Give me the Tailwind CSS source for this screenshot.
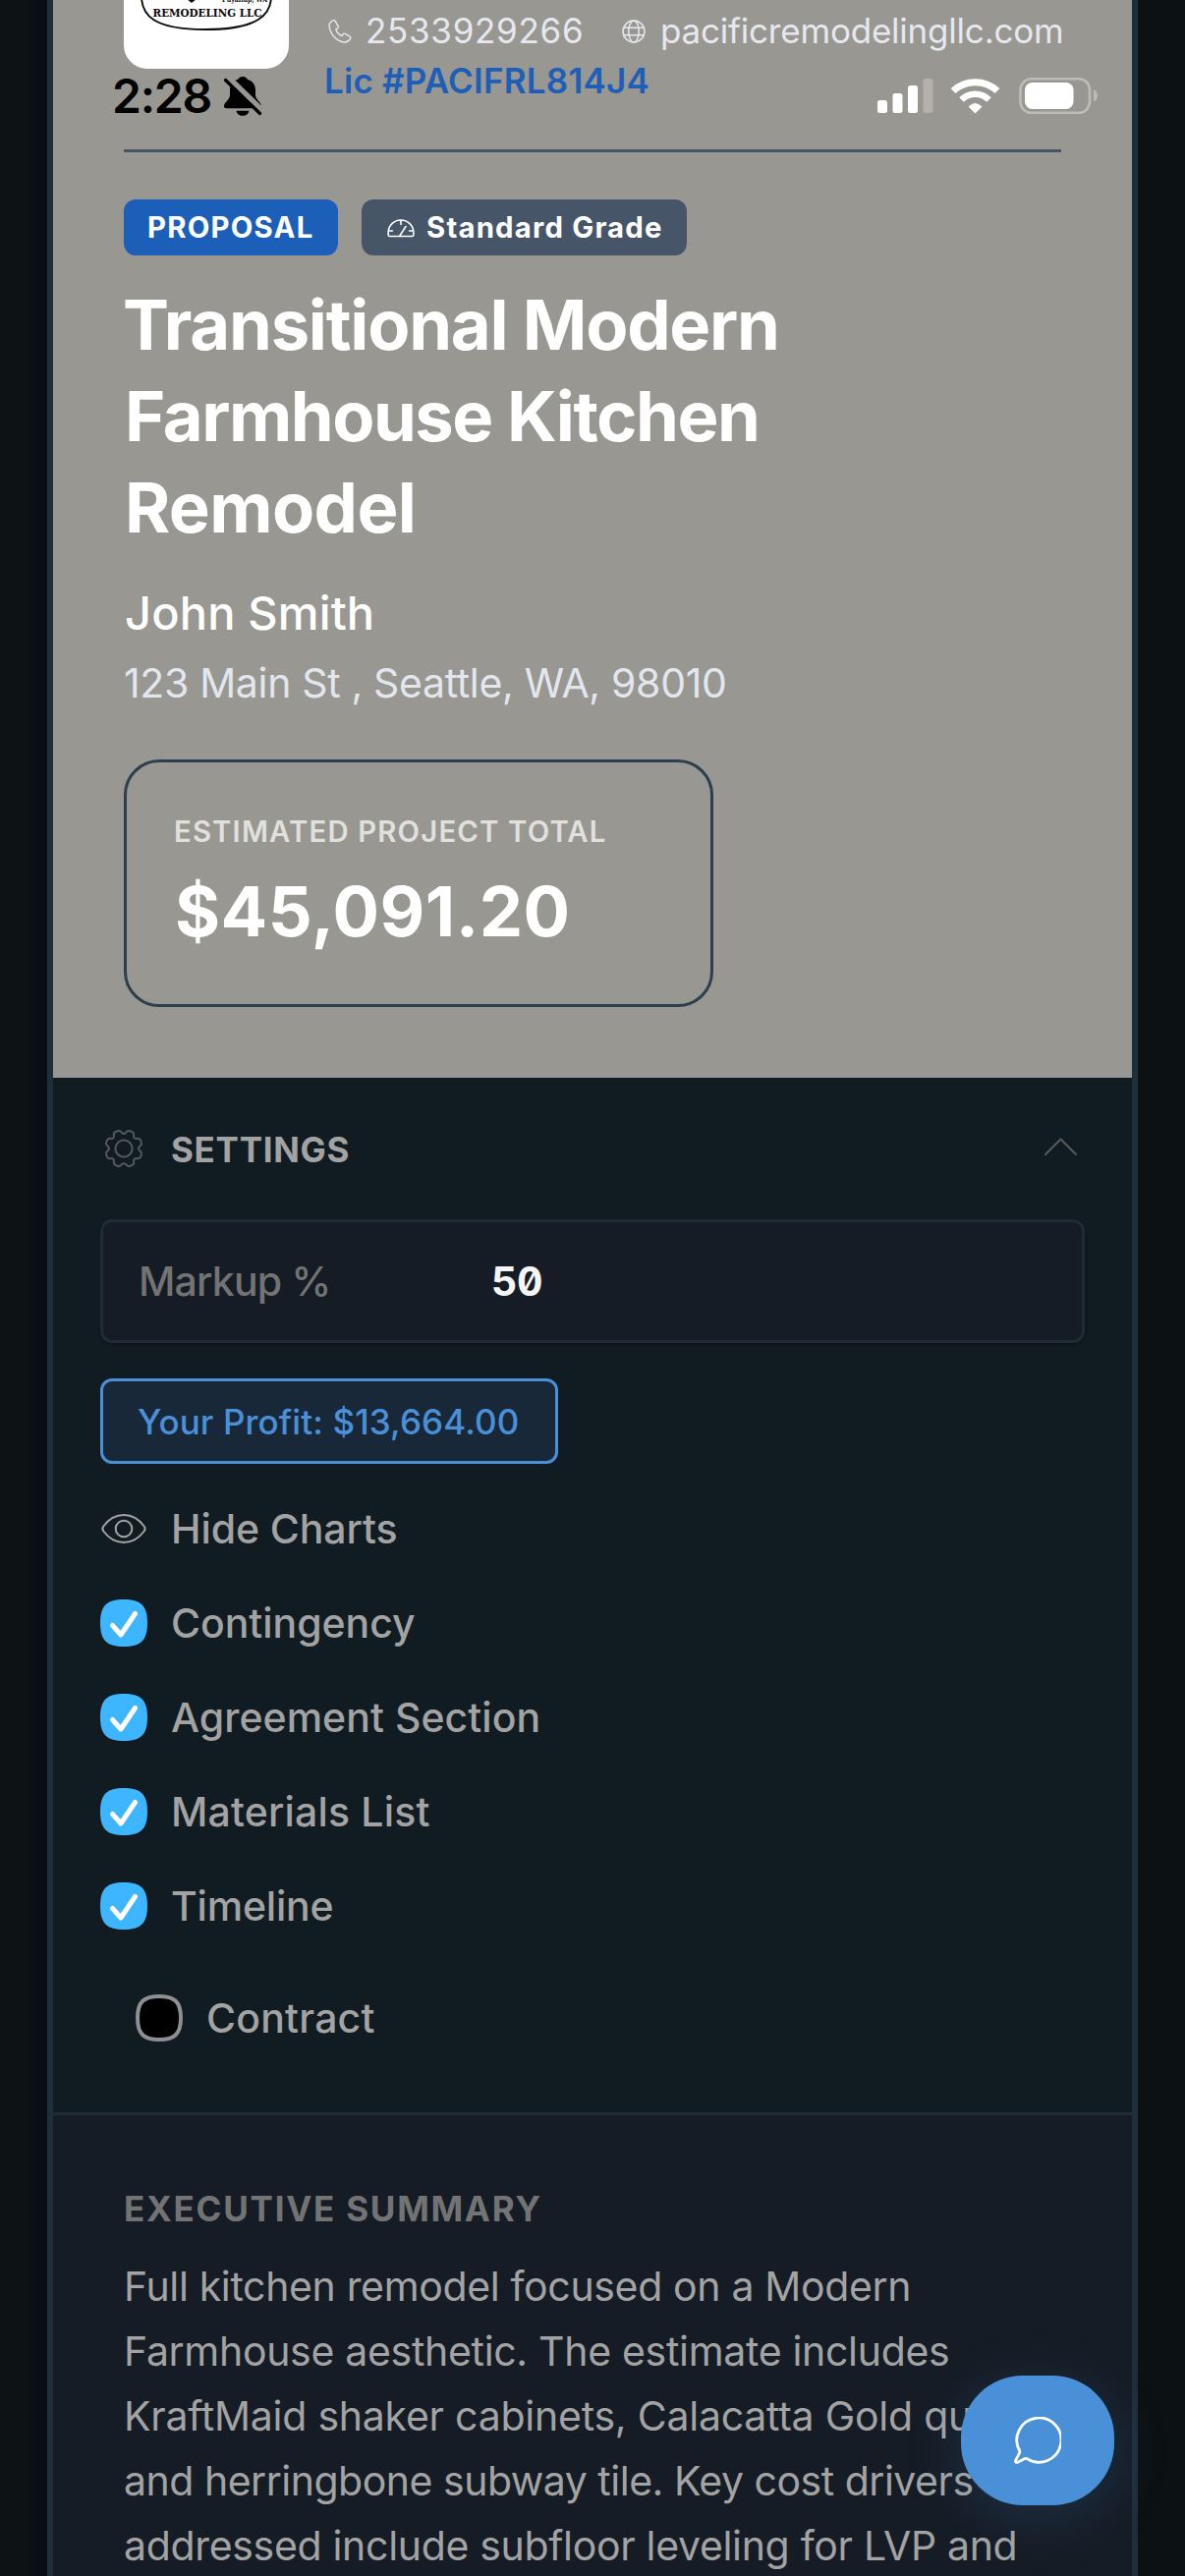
<!DOCTYPE html>
<html lang="en">
<head>
<meta charset="utf-8">
<title>Proposal</title>
<script src="https://cdn.jsdelivr.net/npm/@tailwindcss/browser@4"></script>
</head>
<body class="relative h-[2622px] w-[1206px] overflow-hidden bg-[#0d1214] font-[Inter,sans-serif]">
<div class="h-[2622px] bg-linear-to-r from-[#0d1214] from-[2%] via-[#090d14] via-[4%] to-[#0c1113] px-12 overflow-hidden">
<main class="h-[2700px] border-x-6 border-[#1e2e3b] bg-[#151c25]">

  <!-- Proposal header -->
  <header class="h-[1097px] bg-[#989791] px-[72px] text-white">
    <div class="flex h-[155px] items-start border-b-3 border-[#475569]">
      <div class="h-[70px] w-[168px] shrink-0 overflow-hidden rounded-b-3xl bg-white">
        <svg class="block" width="168" height="70" viewBox="126 0 168 70">
          <path d="M144 -2C145 14 154 30 209 30S275 14 276 -2" fill="none" stroke="#0a0a0a" stroke-width="1.9"/>
          <path d="M190 -1L195 3L200 -1Z" fill="#0a0a0a"/>
          <text x="226" y="2" font-family="DejaVu Serif" font-weight="700" font-size="7.5" textLength="46" lengthAdjust="spacingAndGlyphs" fill="#111">Puyallup, WA</text>
          <text x="155.500" y="17" font-family="DejaVu Serif" font-weight="700" font-size="10.500" textLength="111" lengthAdjust="spacingAndGlyphs" fill="#0a0a0a">REMODELING LLC</text>
        </svg>
      </div>
      <div class="ml-9 shrink-0 pt-1.5">
        <div class="flex h-[51px] items-center text-[35px] text-[#e6e8ef]">
          <svg class="ml-1 mr-3.5 h-6 w-6 shrink-0" viewBox="0 0 24 24" fill="none" stroke="currentColor" stroke-width="1.400" stroke-linejoin="round"><path d="M4.200 1C2 2.500 .8 4.500 1.200 7c.8 8 7.500 15.200 15.300 16 2.700.2 4.500-1.200 6-3.600.5-.9.3-1.800-.5-2.300l-4.600-2.700c-.8-.4-1.700-.3-2.200.4l-1.300 1.700c-3-1.200-5-3.400-6.200-6.400l1.900-1.500c.7-.6.8-1.400.4-2.200L7.300 1.600C6.700.5 5.300.2 4.200 1Z"/></svg>
          <span class="w-[260px] whitespace-nowrap tracking-[0.7px]">2533929266</span>
          <svg class="mr-[15px] ml-[1px] h-6 w-6 shrink-0" viewBox="0 0 24 24" fill="none" stroke="currentColor" stroke-width="1.500"><circle cx="12" cy="12" r="11"/><ellipse cx="12" cy="12" rx="5.200" ry="11"/><path d="M1.600 8.300h20.800M1.600 15.700h20.800"/></svg>
          <span class="whitespace-nowrap tracking-[-0.21px]">pacificremodelingllc.com</span>
        </div>
        <div class="h-[51px] text-[35px] leading-[51px] font-semibold tracking-[0.22px] text-[#1d5fb8]">Lic #PACIFRL814J4</div>
      </div>
    </div>

    <div class="mt-12 flex h-[57px] gap-6">
      <span class="w-[218px] rounded-xl bg-[#1b5fb8] pl-6 text-[29.3px] leading-[57px] font-bold tracking-[1.25px]">PROPOSAL</span>
      <span class="flex w-[331px] items-center rounded-xl bg-[#475569] pl-[26px] text-[29.3px] font-bold">
        <svg class="mr-3 h-7 w-7" viewBox="0 0 28 28" fill="none" stroke="currentColor" stroke-width="1.600" stroke-linejoin="round" stroke-linecap="round"><path d="M2.500 22.500C1.500 22.500 1.200 21.800 1.200 21v-2.500C1.200 11.500 7 6 14 6s12.800 5.500 12.800 12.500V21c0 .8-.3 1.500-1.300 1.500ZM14 6v4.500M1.500 17h4M22.500 17h4M12.500 22.500L19 12.500"/></svg>
        <span class="tracking-[1.2px] whitespace-nowrap">Standard Grade</span>
      </span>
    </div>

    <h1 class="mt-6 text-[70.5px] leading-[93px] font-bold whitespace-nowrap">
      <span class="-ml-px block tracking-[-1.25px]">Transitional Modern</span>
      <span class="ml-px block tracking-[-1.48px]">Farmhouse Kitchen</span>
      <span class="ml-px block tracking-[-0.6px]">Remodel</span>
    </h1>
    <p class="mt-[31px] ml-px h-[60px] text-[47px] leading-[60px] font-medium tracking-[0.15px]">John Smith</p>
    <p class="mt-[11px] h-[60px] text-[41px] leading-[60px] tracking-[-0.34px] text-[#e2e6ee]">123 Main St , Seattle, WA, 98010</p>

    <div class="mt-12 h-[252px] w-[600px] rounded-[36px] border-3 border-[#2c3f4e] pt-[51px] pl-12 whitespace-nowrap">
      <div class="h-10 text-[29.3px] leading-10 font-semibold tracking-[1.16px] text-[#e0e0de]">ESTIMATED PROJECT TOTAL</div>
      <div class="mt-4 ml-px text-[70.5px] leading-[90px] font-bold tracking-[0.45px]">$45,091.20</div>
    </div>
  </header>

  <!-- Settings -->
  <section class="h-[1056px] border-b-3 border-[#1f2d36] bg-[#111b22] px-12 pt-[43px] text-[#a3a3a3]">
    <div class="flex h-[60px] items-center">
      <svg class="-mt-0.5 h-12 w-12" viewBox="0 0 48 48" fill="none" stroke="#55585b" stroke-width="2" stroke-linejoin="round"><circle cx="24" cy="24" r="8.600"/><path d="M20 6.200C18.600 5.400 14.500 7 14 8.600C13.500 10.800 14.500 12 13.300 13.300C12 14.500 10.800 13.500 8.600 14C7 14.500 5.400 18.600 6.200 20C7.300 22 9 22.200 9 24C9 25.800 7.300 26 6.200 28C5.400 29.400 7 33.500 8.600 34C10.800 34.500 12 33.500 13.300 34.700C14.500 36 13.500 37.200 14 39.400C14.500 41 18.600 42.600 20 41.800C22 40.700 22.200 39 24 39C25.800 39 26 40.700 28 41.800C29.400 42.600 33.500 41 34 39.400C34.500 37.200 33.500 36 34.700 34.700C36 33.500 37.200 34.500 39.400 34C41 33.500 42.600 29.400 41.800 28C40.700 26 39 25.800 39 24C39 22.200 40.700 22 41.800 20C42.600 18.600 41 14.500 39.400 14C37.200 13.500 36 14.500 34.700 13.300C33.500 12 34.500 10.800 34 8.600C33.500 7 29.400 5.400 28 6.200C26 7.300 25.800 9 24 9C22.200 9 22 7.300 20 6.200Z"/></svg>
      <h2 class="ml-6 flex-1 text-[35px] font-bold tracking-[0.7px]">SETTINGS</h2>
      <svg class="-mt-2 mr-px h-12 w-12" viewBox="0 0 48 48" fill="none" stroke="#5a5a5c" stroke-width="2" stroke-linecap="round" stroke-linejoin="round"><path d="M9 33L24.500 17.500L40 33"/></svg>
    </div>

    <label class="mt-[41px] flex h-[126px] items-center rounded-xl border-3 border-[#1e2c35] bg-[#151c25] pl-9 shadow-sm shadow-black/30">
      <span class="w-[359px] pt-0.5 text-[41px] font-medium tracking-[-0.8px] text-[#737373]">Markup %</span>
      <span class="pt-0.5 text-[41px] font-bold text-[#f5f5f5] [font-feature-settings:'zero','tnum'] tracking-[-0.5px]">50</span>
    </label>

    <div class="mt-9 h-[87px] w-[466px] rounded-xl border-3 border-[#4a90d9] bg-[#182838] pl-[35px] text-[35px] leading-[82px] font-medium tracking-[0.12px] whitespace-nowrap text-[#4a90d9]">Your Profit: $13,664.00</div>

    <div class="mt-[42px] flex flex-col gap-12 text-[41px] leading-[48px] font-medium">
      <div class="flex h-12 items-center gap-6"><svg class="h-12 w-12" viewBox="0 0 48 48" fill="none" stroke="#a3a3a3" stroke-width="2" stroke-linejoin="round"><circle cx="24" cy="24" r="8.300"/><path d="M3.300 26.500C2.200 25 2.200 23 3.300 21.500C8.500 14.500 15.500 10 24 10S39.500 14.500 44.700 21.500C45.800 23 45.800 25 44.700 26.500C39.500 33.500 32.500 38 24 38S8.500 33.500 3.300 26.500Z"/></svg><span class="tracking-[-0.1px]">Hide Charts</span></div>
      <div class="flex h-12 items-center gap-6"><svg class="h-12 w-12" viewBox="0 0 48 48"><path d="M24 0C41 0 48 6 48 24S41 48 24 48S0 42 0 24S7 0 24 0Z" fill="#3db5ff"/><path d="M12.500 26.500L21 36L35.500 14.500" fill="none" stroke="#fff" stroke-width="5" stroke-linecap="round" stroke-linejoin="round"/></svg><span class="tracking-[-0.05px]">Contingency</span></div>
      <div class="flex h-12 items-center gap-6"><svg class="h-12 w-12" viewBox="0 0 48 48"><path d="M24 0C41 0 48 6 48 24S41 48 24 48S0 42 0 24S7 0 24 0Z" fill="#3db5ff"/><path d="M12.500 26.500L21 36L35.500 14.500" fill="none" stroke="#fff" stroke-width="5" stroke-linecap="round" stroke-linejoin="round"/></svg><span class="tracking-[0.05px]">Agreement Section</span></div>
      <div class="flex h-12 items-center gap-6"><svg class="h-12 w-12" viewBox="0 0 48 48"><path d="M24 0C41 0 48 6 48 24S41 48 24 48S0 42 0 24S7 0 24 0Z" fill="#3db5ff"/><path d="M12.500 26.500L21 36L35.500 14.500" fill="none" stroke="#fff" stroke-width="5" stroke-linecap="round" stroke-linejoin="round"/></svg><span class="tracking-[0.17px]">Materials List</span></div>
      <div class="flex h-12 items-center gap-6"><svg class="h-12 w-12" viewBox="0 0 48 48"><path d="M24 0C41 0 48 6 48 24S41 48 24 48S0 42 0 24S7 0 24 0Z" fill="#3db5ff"/><path d="M12.500 26.500L21 36L35.500 14.500" fill="none" stroke="#fff" stroke-width="5" stroke-linecap="round" stroke-linejoin="round"/></svg><span class="tracking-[-0.2px]">Timeline</span></div>
      <div class="mt-[18px] ml-9 flex h-12 items-center gap-6"><svg class="h-12 w-12" viewBox="0 0 48 48"><path d="M24 2C39.500 2 46 7.500 46 24S39.500 46 24 46S2 40.500 2 24S8.500 2 24 2Z" fill="#000" stroke="#8e8e93" stroke-width="4"/></svg><span class="tracking-[0.2px]">Contract</span></div>
    </div>
  </section>

  <!-- Executive summary -->
  <section class="px-[72px] pt-[70px] whitespace-nowrap">
    <h2 class="h-[50px] text-[35px] leading-[50px] font-bold tracking-[1.74px] text-[#737373]">EXECUTIVE SUMMARY</h2>
    <p class="mt-[21px] text-[41px] leading-[66px] text-[#a3a3a3]">
      <span class="block tracking-[-0.35px]">Full kitchen remodel focused on a Modern</span>
      <span class="block tracking-[-0.31px]">Farmhouse aesthetic. The estimate includes</span>
      <span class="block tracking-[-0.24px]">KraftMaid shaker cabinets, Calacatta Gold quartz,</span>
      <span class="block tracking-[-0.49px]">and herringbone subway tile. Key cost drivers</span>
      <span class="block tracking-[-0.32px]">addressed include subfloor leveling for LVP and</span>
    </p>
  </section>
</main>
</div>

<!-- Chat button floating over the page -->
<button class="absolute top-[2418px] left-[978px] flex h-[132px] w-[156px] items-center justify-center rounded-[63px] bg-[#4a90d9] shadow-[0_12px_60px_rgba(74,144,217,0.18)]">
  <svg class="h-12 w-12" viewBox="0 0 48 48" fill="none" stroke="#fff" stroke-width="2.800" stroke-linejoin="round" stroke-linecap="round"><path d="M5.800 34.800A22.600 22.600 0 1 1 13.200 42.600C12.500 42.300 11.800 42.200 11 42.500L3.800 46.200C2.200 46.900 1.200 46 1.600 44.400L5.500 36.800C5.900 36 6 35.400 5.800 34.800Z"/></svg>
</button>

<!-- Phone status bar over the page -->
<div class="absolute top-[78px] left-[114px] flex h-10 w-[1004px] items-center">
  <span class="text-[48px] leading-10 font-semibold tracking-[-1.21px] text-black">2:28</span>
  <svg class="ml-[12px] h-10 w-10" viewBox="0 0 40 40"><path d="M20 0c-2.500 0-4 1.200-4.800 2.700C9.300 4.500 7 9.500 7 14v5c0 4-6 7.500-6 11 0 1.500 1 2.200 2.200 2.200h33.600c1.200 0 2.200-.7 2.200-2.200 0-3.500-6-7-6-11v-5c0-4.500-2.300-9.500-8.200-11.300C24 1.200 22.500 0 20 0ZM13.500 34.800h13c-.5 3-3 5-6.500 5s-6-2-6.500-5Z" fill="#000"/><path d="M4 1L40 36" stroke="#989791" stroke-width="8"/><path d="M2.500 3.500L37.500 37.500" stroke="#000" stroke-width="3.200" stroke-linecap="round"/></svg>
  <svg class="ml-auto h-10 w-[225px]" viewBox="893 78 225 40"><g fill="#fff"><rect x="893" y="102" width="10" height="13" rx="2.500"/><rect x="908.500" y="95" width="10" height="20" rx="2.500"/><rect x="924" y="87" width="10" height="28" rx="2.500"/></g><rect x="939.500" y="80" width="10" height="35" rx="2.500" fill="#b3b0ae"/>
    <g fill="none" stroke="#fff"><path d="M970 92.500A33 33 0 0 1 1015 92.500" stroke-width="7"/><path d="M978.500 101.500A20 20 0 0 1 1006.500 101.500" stroke-width="6.500"/></g><path d="M985.500 108.500Q992.500 101.500 999.500 108.500L992.500 115.500Z" fill="#fff"/>
    <rect x="1038.500" y="80.300" width="70.500" height="34.500" rx="11" fill="none" stroke="#bdbcb8" stroke-width="2.600"/><rect x="1043" y="84" width="49.500" height="27" rx="7.500" fill="#fff"/><path d="M1113 91.500C1118.300 93.500 1118.300 101.500 1113 103.500Z" fill="#bdbcb8"/></svg>
</div>
</body>
</html>
